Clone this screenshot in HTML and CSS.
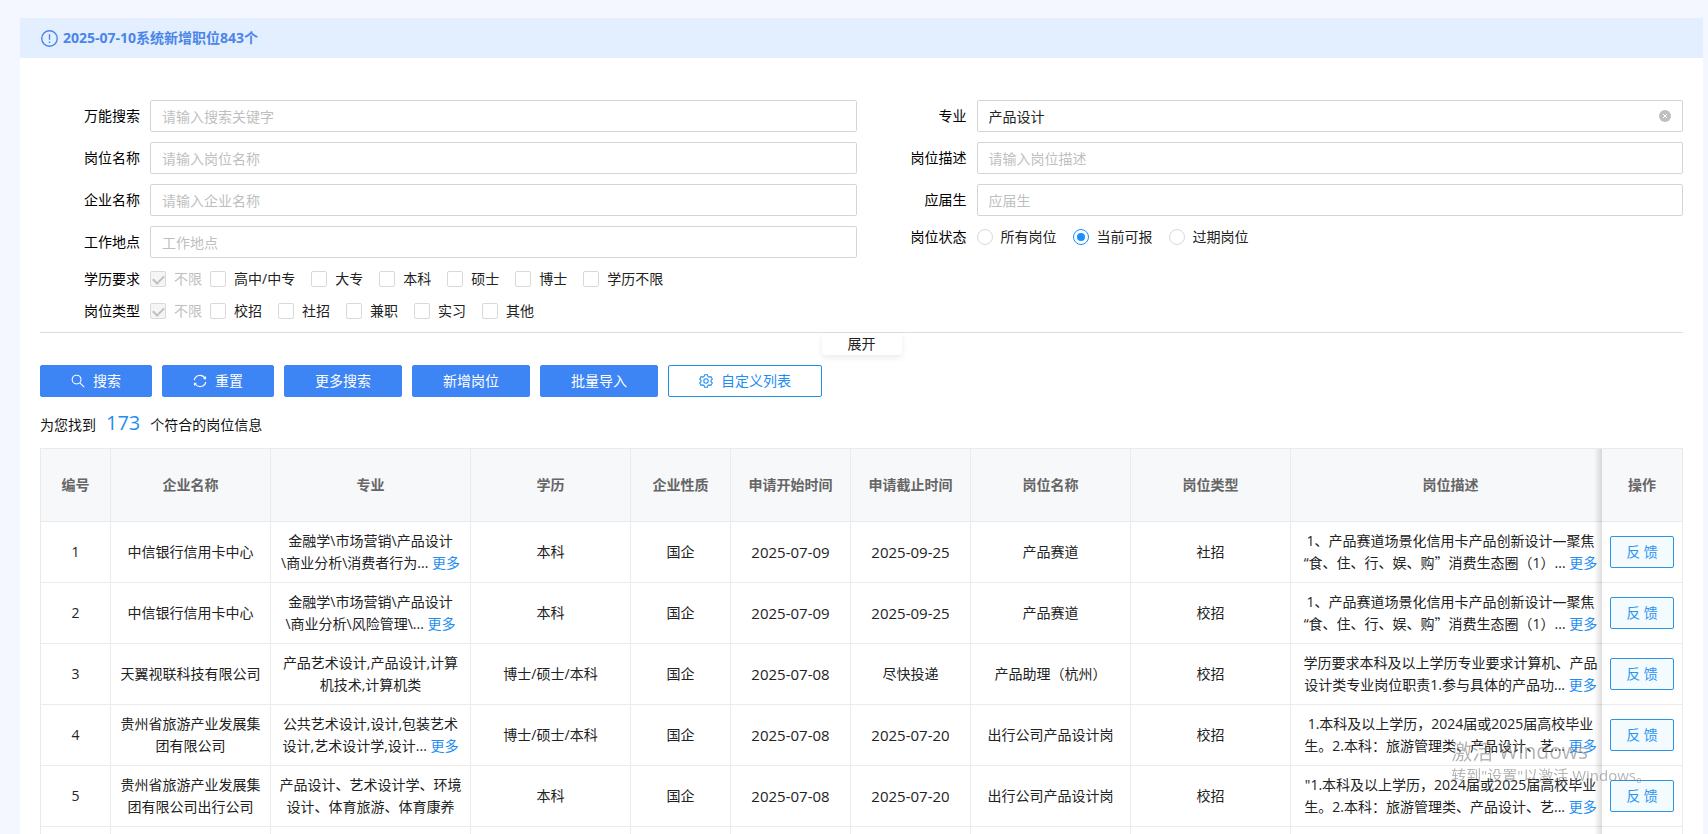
FILE: index.html
```
<!DOCTYPE html>
<html lang="zh-CN">
<head>
<meta charset="utf-8">
<meta name="viewport" content="width=device-width, initial-scale=1">
<title>职位查询</title>
<link rel="stylesheet" href="styles.css">
</head>
<body>

<div class="panel">
  <div class="notice">
    <svg class="notice-icon" viewBox="0 0 16 16"><circle cx="8" cy="8" r="7.3"/><path d="M8 4v5.2M8 10.8v1.4"/></svg>
    <span>2025-07-10系统新增职位843个</span>
  </div>

  <div class="content">
    <!-- search form -->
    <form class="search-form" id="searchForm" onsubmit="return false">
      <div class="form-item">
        <label for="keyword">万能搜索</label>
        <input type="text" id="keyword" class="text-input" placeholder="请输入搜索关键字">
      </div>
      <div class="form-item">
        <label for="major">专业</label>
        <div class="clearable">
          <input type="text" id="major" class="text-input" value="产品设计">
          <button type="button" class="clear-btn" id="clearMajor" aria-label="清空">
            <svg viewBox="0 0 12 12"><circle cx="6" cy="6" r="6"/><path d="M4 4l4 4M8 4l-4 4"/></svg>
          </button>
        </div>
      </div>
      <div class="form-item">
        <label for="jobName">岗位名称</label>
        <input type="text" id="jobName" class="text-input" placeholder="请输入岗位名称">
      </div>
      <div class="form-item">
        <label for="jobDesc">岗位描述</label>
        <input type="text" id="jobDesc" class="text-input" placeholder="请输入岗位描述">
      </div>
      <div class="form-item">
        <label for="company">企业名称</label>
        <input type="text" id="company" class="text-input" placeholder="请输入企业名称">
      </div>
      <div class="form-item">
        <label for="graduate">应届生</label>
        <input type="text" id="graduate" class="text-input" placeholder="应届生">
      </div>
      <div class="form-item">
        <label for="place">工作地点</label>
        <input type="text" id="place" class="text-input" placeholder="工作地点">
      </div>
      <div class="form-item" role="radiogroup" aria-labelledby="statusLabel">
        <span class="item-label" id="statusLabel">岗位状态</span>
        <div class="options">
          <label class="option"><input type="radio" name="status">所有岗位</label>
          <label class="option"><input type="radio" name="status" checked>当前可报</label>
          <label class="option"><input type="radio" name="status">过期岗位</label>
        </div>
      </div>
      <div class="form-item wide" role="group" aria-labelledby="eduLabel">
        <span class="item-label" id="eduLabel">学历要求</span>
        <div class="options">
          <label class="option disabled"><input type="checkbox" checked disabled>不限</label>
          <label class="option"><input type="checkbox">高中/中专</label>
          <label class="option"><input type="checkbox">大专</label>
          <label class="option"><input type="checkbox">本科</label>
          <label class="option"><input type="checkbox">硕士</label>
          <label class="option"><input type="checkbox">博士</label>
          <label class="option"><input type="checkbox">学历不限</label>
        </div>
      </div>
      <div class="form-item wide" role="group" aria-labelledby="typeLabel">
        <span class="item-label" id="typeLabel">岗位类型</span>
        <div class="options">
          <label class="option disabled"><input type="checkbox" checked disabled>不限</label>
          <label class="option"><input type="checkbox">校招</label>
          <label class="option"><input type="checkbox">社招</label>
          <label class="option"><input type="checkbox">兼职</label>
          <label class="option"><input type="checkbox">实习</label>
          <label class="option"><input type="checkbox">其他</label>
        </div>
      </div>
    </form>

    <div class="expand-bar">
      <button type="button" class="expand-btn">展开</button>
    </div>

    <div class="toolbar">
      <button type="button" class="btn">
        <svg class="icon" viewBox="0 0 14 14"><circle cx="5.6" cy="5.6" r="4.4"/><path d="M8.9 8.9l4.3 4.3"/></svg>搜索
      </button>
      <button type="button" class="btn">
        <svg class="icon" viewBox="0 0 14 14"><path d="M1.2 6.2A5.9 5.9 0 0 1 12 4.2M12.8 7.8A5.9 5.9 0 0 1 2 9.8M12.5 2.6v2H10.6M1.5 11.4v-2H3.4"/></svg>重置
      </button>
      <button type="button" class="btn">更多搜索</button>
      <button type="button" class="btn">新增岗位</button>
      <button type="button" class="btn">批量导入</button>
      <button type="button" class="btn btn-ghost">
        <svg class="icon" viewBox="0 0 14 14"><path d="M5.6 .7h2.8l.5 1.7 1.2.7 1.8-.5 1.4 2.5-1.3 1.2v1.4l1.3 1.2-1.4 2.5-1.8-.5-1.2.7-.5 1.7H5.6l-.5-1.7-1.2-.7-1.8.5L.7 8.9 2 7.7V6.3L.7 5.1l1.4-2.5 1.8.5 1.2-.7z"/><circle cx="7" cy="7" r="2.2"/></svg>自定义列表
      </button>
    </div>

    <p class="result">为您找到<span class="count">173</span>个符合的岗位信息</p>

    <div class="table-wrap">
      <table class="job-table">
        <colgroup>
          <col class="w70"><col class="w160"><col class="w200"><col class="w160"><col class="w100"><col class="w120">
          <col class="w120"><col class="w160"><col class="w160"><col class="w320"><col class="w81">
        </colgroup>
        <thead>
          <tr>
            <th>编号</th><th>企业名称</th><th>专业</th><th>学历</th><th>企业性质</th><th>申请开始时间</th>
            <th>申请截止时间</th><th>岗位名称</th><th>岗位类型</th><th>岗位描述</th><th class="fixed">操作</th>
          </tr>
        </thead>
        <tbody>
          <tr>
            <td>1</td>
            <td>中信银行信用卡中心</td>
            <td>金融学\市场营销\产品设计<br>\商业分析\消费者行为... <a href="#">更多</a></td>
            <td>本科</td>
            <td>国企</td>
            <td class="date">2025-07-09</td>
            <td class="date">2025-09-25</td>
            <td>产品赛道</td>
            <td>社招</td>
            <td>1、产品赛道场景化信用卡产品创新设计—聚焦<br>“食、住、行、娱、购<span class="cjk">”</span>消费生态圈（1）... <a href="#">更多</a></td>
            <td class="fixed"><button type="button" class="feedback">反 馈</button></td>
          </tr>
          <tr>
            <td>2</td>
            <td>中信银行信用卡中心</td>
            <td>金融学\市场营销\产品设计<br>\商业分析\风险管理\... <a href="#">更多</a></td>
            <td>本科</td>
            <td>国企</td>
            <td class="date">2025-07-09</td>
            <td class="date">2025-09-25</td>
            <td>产品赛道</td>
            <td>校招</td>
            <td>1、产品赛道场景化信用卡产品创新设计—聚焦<br>“食、住、行、娱、购<span class="cjk">”</span>消费生态圈（1）... <a href="#">更多</a></td>
            <td class="fixed"><button type="button" class="feedback">反 馈</button></td>
          </tr>
          <tr>
            <td>3</td>
            <td>天翼视联科技有限公司</td>
            <td>产品艺术设计,产品设计,计算<br>机技术,计算机类</td>
            <td>博士/硕士/本科</td>
            <td>国企</td>
            <td class="date">2025-07-08</td>
            <td>尽快投递</td>
            <td>产品助理（杭州）</td>
            <td>校招</td>
            <td>学历要求本科及以上学历专业要求计算机、产品<br>设计类专业岗位职责1.参与具体的产品功... <a href="#">更多</a></td>
            <td class="fixed"><button type="button" class="feedback">反 馈</button></td>
          </tr>
          <tr>
            <td>4</td>
            <td>贵州省旅游产业发展集<br>团有限公司</td>
            <td>公共艺术设计,设计,包装艺术<br>设计,艺术设计学,设计... <a href="#">更多</a></td>
            <td>博士/硕士/本科</td>
            <td>国企</td>
            <td class="date">2025-07-08</td>
            <td class="date">2025-07-20</td>
            <td>出行公司产品设计岗</td>
            <td>校招</td>
            <td>1.本科及以上学历，2024届或2025届高校毕业<br>生。2.本科：旅游管理类、产品设计、艺... <a href="#">更多</a></td>
            <td class="fixed"><button type="button" class="feedback">反 馈</button></td>
          </tr>
          <tr>
            <td>5</td>
            <td>贵州省旅游产业发展集<br>团有限公司出行公司</td>
            <td>产品设计、艺术设计学、环境<br>设计、体育旅游、体育康养</td>
            <td>本科</td>
            <td>国企</td>
            <td class="date">2025-07-08</td>
            <td class="date">2025-07-20</td>
            <td>出行公司产品设计岗</td>
            <td>校招</td>
            <td>"1.本科及以上学历，2024届或2025届高校毕业<br>生。2.本科：旅游管理类、产品设计、艺... <a href="#">更多</a></td>
            <td class="fixed"><button type="button" class="feedback">反 馈</button></td>
          </tr>
          <tr>
            <td></td><td></td><td></td><td></td><td></td><td></td>
            <td></td><td></td><td></td><td></td><td class="fixed"></td>
          </tr>
        </tbody>
      </table>
    </div>
  </div>
</div>

<div class="activate">
  <p class="activate-title">激活 Windows</p>
  <p>转到"设置"以激活 Windows。</p>
</div>

<script>
// empty the major field
document.getElementById("clearMajor").onclick = function() {
  document.getElementById("major").value = "";
}
</script>

</body>
</html>
```

FILE: styles.css
```
* {
  box-sizing: border-box;
}

body {
  margin: 0;
  padding: 18px 5px 0 20px;
  height: 100vh;
  overflow: hidden;
  background: #f4f7ff;
  color: #222;
  font-family: "Open Sans", "Noto Sans CJK SC", sans-serif;
  font-size: 14px;
  line-height: 22px;
}

button,
input {
  font: inherit;
  color: inherit;
  margin: 0;
}

button {
  cursor: pointer;
}

p {
  margin: 0;
}

a {
  color: #1f8ef2;
  text-decoration: none;
}

/* full-width punctuation */
.cjk {
  font-family: "Noto Sans CJK SC", sans-serif;
  line-height: 1;
}

.panel {
  background: #fff;
}

/* Top notice */
.notice {
  display: flex;
  align-items: center;
  gap: 5px;
  height: 40px;
  padding: 0 21px;
  background: #e3eeff;
  color: #4a86e8;
  font-weight: bold;
}

.notice-icon {
  width: 17px;
  height: 17px;
  fill: none;
  stroke: currentColor;
  stroke-width: 1.3;
}

.content {
  padding: 42px 20px 0;
}

/* Search form */
.search-form {
  display: grid;
  grid-template-columns: 1fr 1fr;
  gap: 10px;
  padding-bottom: 10px;
  border-bottom: 1px solid #dcdcdc;
}

.form-item {
  display: grid;
  grid-template-columns: 100px 1fr;
  gap: 10px;
  align-items: center;
}

.form-item.wide {
  grid-column: 1 / 3;
}

.form-item > label,
.item-label {
  color: #000;
  text-align: right;
}

/* option rows sit at the top of their line */
.form-item[role] {
  align-items: start;
}

.text-input {
  width: 100%;
  height: 32px;
  padding: 4px 11px;
  border: 1px solid #d5d5d5;
  border-radius: 2px;
  outline: none;
  background: #fff;
}

.text-input:focus {
  border-color: #1890ff;
}

.text-input::placeholder {
  color: #bfbfbf;
}

.clearable {
  position: relative;
}

.clear-btn {
  position: absolute;
  top: 10px;
  right: 12px;
  width: 12px;
  height: 12px;
  padding: 0;
  border: none;
  background: none;
}

.clear-btn svg {
  display: block;
  fill: #bfbfbf;
  stroke: #fff;
}

.clear-btn circle {
  stroke: none;
}

.options {
  display: flex;
  gap: 16px;
}

.option {
  display: flex;
  align-items: center;
  gap: 8px;
}

.option.disabled {
  color: #bfbfbf;
  margin-right: -8px;
}

.option input {
  appearance: none;
  display: grid;
  place-items: center;
  width: 16px;
  height: 16px;
  border: 1px solid #d9d9d9;
  border-radius: 2px;
  background: #fff;
}

.option input[type="radio"] {
  border-radius: 50%;
}

.option input[type="radio"]:checked {
  border-color: #1890ff;
}

.option input[type="radio"]:checked::after {
  content: "";
  width: 8px;
  height: 8px;
  border-radius: 50%;
  background: #1890ff;
}

.option input[type="checkbox"]:checked::after {
  content: "";
  width: 5px;
  height: 9px;
  margin-bottom: 2px;
  border: solid #1890ff;
  border-width: 0 2px 2px 0;
  transform: rotate(45deg);
}

.option input:disabled {
  background: #f5f5f5;
}

.option input[type="checkbox"]:disabled::after {
  border-color: #bfbfbf;
}

.expand-bar {
  display: flex;
  justify-content: center;
}

.expand-btn {
  width: 80px;
  height: 22px;
  padding: 0;
  border: none;
  border-radius: 0 0 4px 4px;
  background: #fff;
  box-shadow: 0 3px 6px rgba(0, 0, 0, 0.08);
}

/* Buttons */
.toolbar {
  display: flex;
  gap: 10px;
  padding: 10px 0;
}

.btn {
  display: flex;
  align-items: center;
  gap: 8px;
  height: 32px;
  padding: 0 30px;
  border: 1px solid #3d84f4;
  border-radius: 2px;
  background: #3d84f4;
  color: #fff;
}

.btn:hover {
  opacity: 0.9;
}

.btn-ghost {
  border-color: #1f8fe0;
  background: #fff;
  color: #1f8ef2;
}

.icon {
  width: 14px;
  height: 14px;
  fill: none;
  stroke: currentColor;
  stroke-width: 1.1;
}

.result {
  display: flex;
  align-items: baseline;
  gap: 10px;
  padding-bottom: 10px;
  color: #111;
}

.count {
  color: #1f8ef2;
  font-size: 20px;
  line-height: 31px;
}

/* Table */
.table-wrap {
  overflow-x: auto;
  scrollbar-width: none;
}

.job-table {
  table-layout: fixed;
  width: 1652px;
  min-width: 100%;
  border: solid #e8eaec;
  border-width: 1px 0 0 1px;
  border-spacing: 0;
  text-align: center;
}

.w70 { width: 70px; }
.w81 { width: 81px; }
.w100 { width: 100px; }
.w120 { width: 120px; }
.w160 { width: 160px; }
.w200 { width: 200px; }
.w320 { width: 320px; }

.job-table th {
  height: 73px;
  padding: 0 8px;
  border: solid #e8eaec;
  border-width: 0 1px 1px 0;
  background: #f7f8fa;
  color: #666;
}

.job-table td {
  height: 61px;
  padding: 8px;
  border: solid #ebebeb;
  border-width: 0 1px 1px 0;
  background: #fff;
  white-space: nowrap;
}

.job-table .date {
  font-size: 15px;
}

/* the last column stays in view */
.job-table .fixed {
  position: sticky;
  right: 0;
  padding: 0;
}

.fixed::before {
  content: "";
  position: absolute;
  top: 0;
  bottom: -1px;
  left: -8px;
  width: 8px;
  background: linear-gradient(to left, rgba(0, 0, 0, 0.13), transparent);
}

.feedback {
  width: 64px;
  height: 32px;
  padding: 0;
  border: 1px solid #2b94e5;
  border-radius: 2px;
  background: #f3fbff;
  color: #2b94f0;
}

/* System watermark in the corner */
.activate {
  position: fixed;
  right: 57px;
  bottom: 47px;
  color: rgba(120, 120, 120, 0.55);
  font-size: 15px;
  line-height: 24px;
  pointer-events: none;
}

.activate-title {
  font-size: 21px;
}
```
